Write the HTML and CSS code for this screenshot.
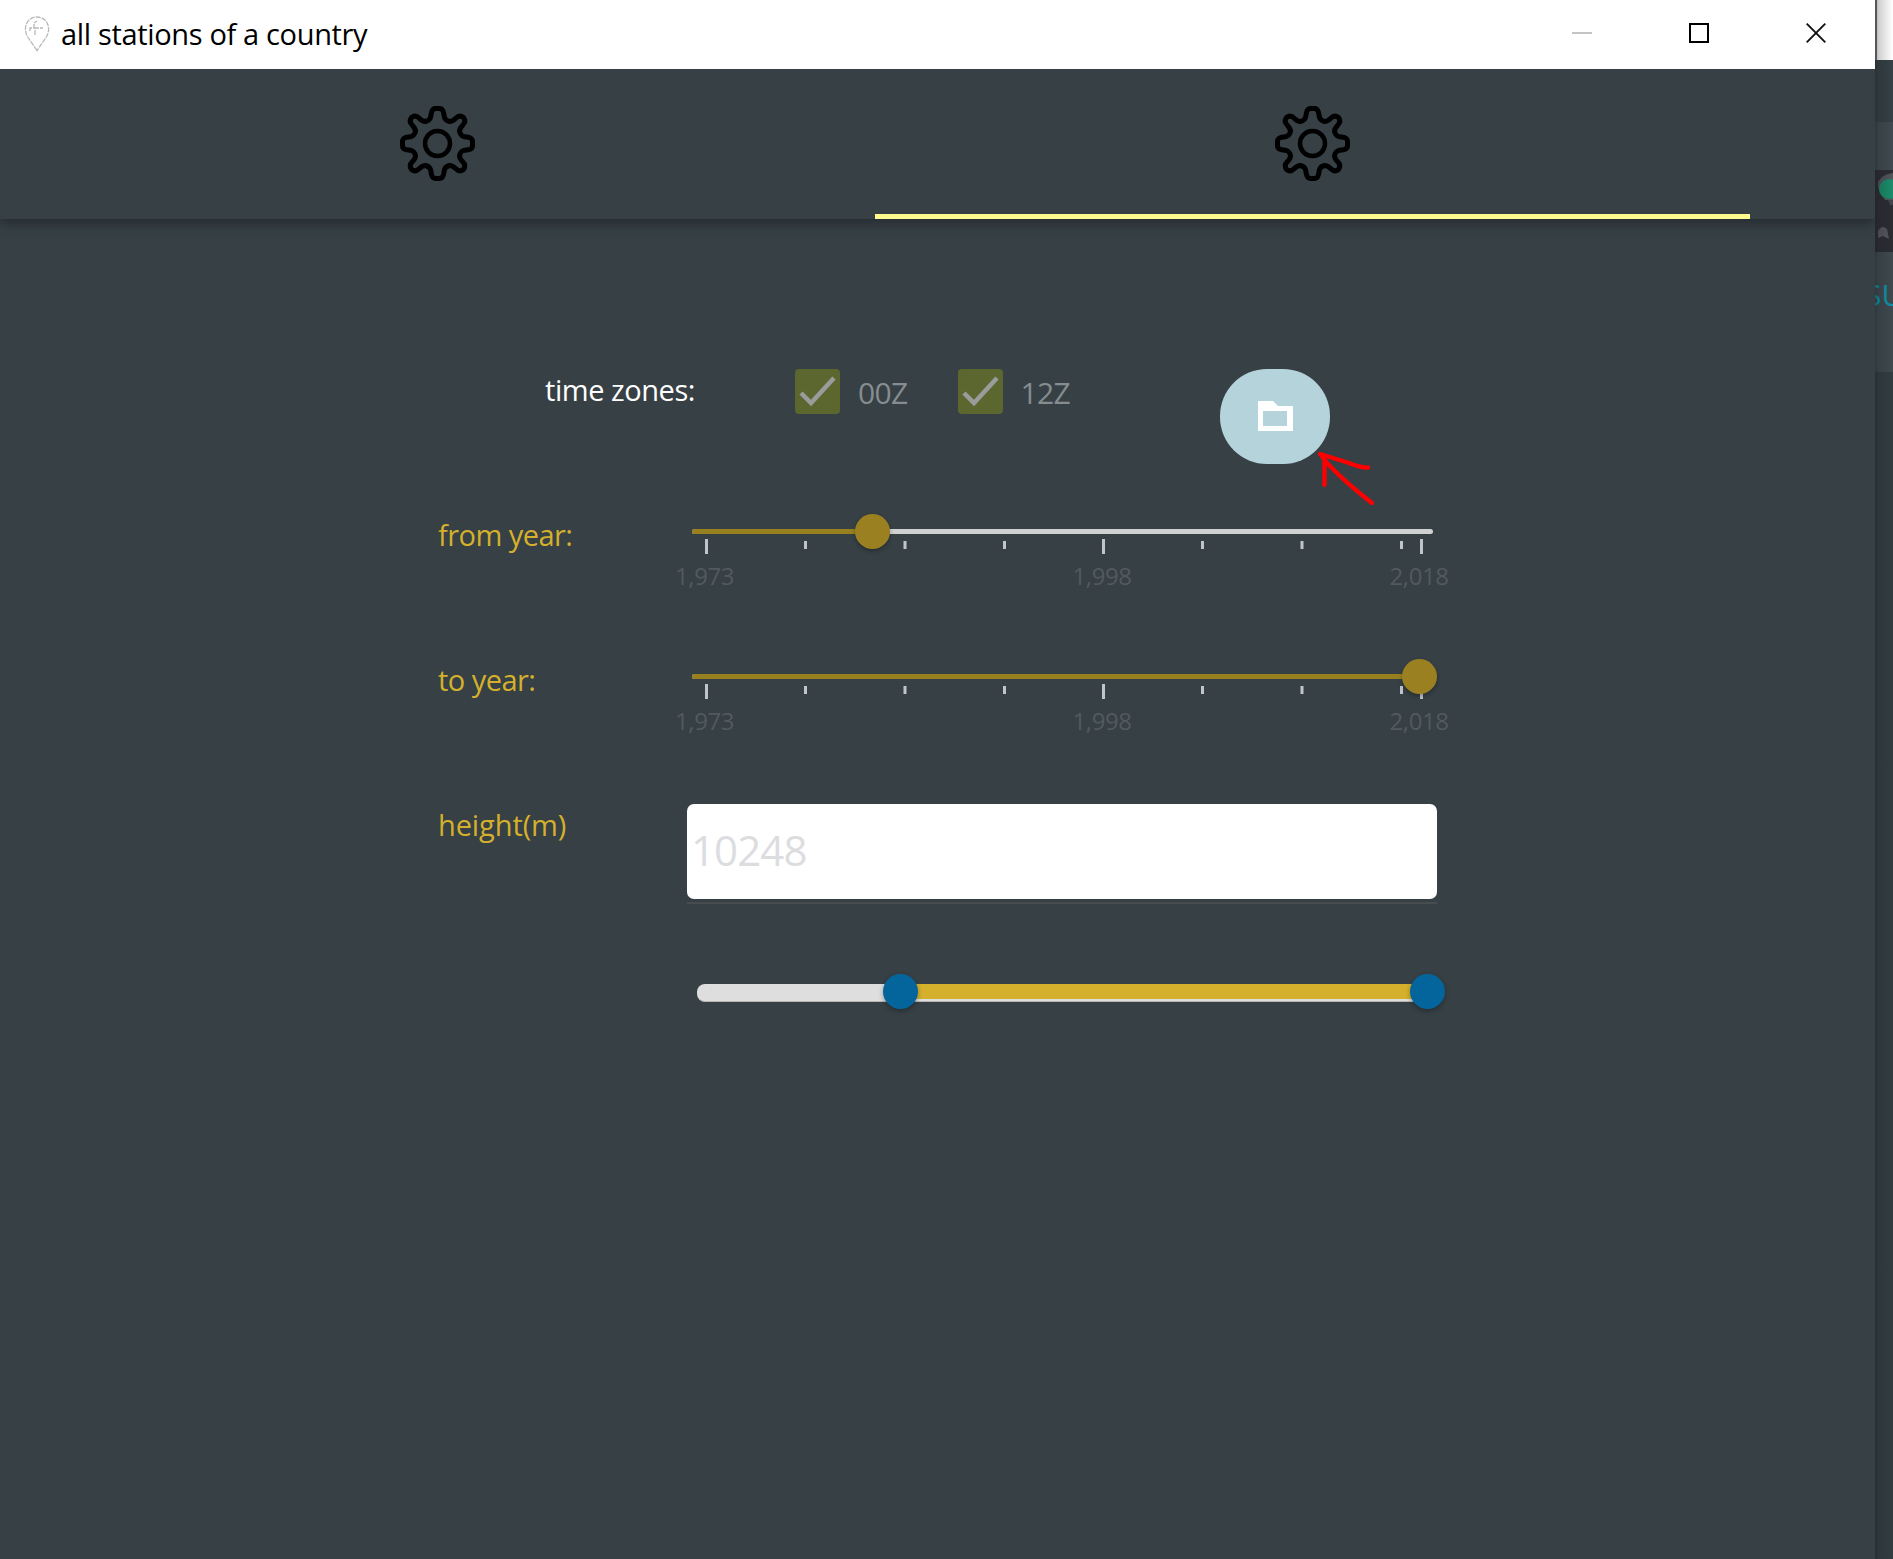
FILE: index.html
```html
<!DOCTYPE html>
<html lang="en">
<head>
<meta charset="utf-8">
<title>all stations of a country</title>
<link rel="stylesheet" href="styles.css">
</head>
<body>
<svg width="0" height="0" class="defs" aria-hidden="true">
  <symbol id="gear" viewBox="-37.5 -37.5 75 75">
    <g fill="none" stroke="#000" stroke-width="5" stroke-linejoin="round">
      <path d="M-6-31Q-5-35-2-35H2Q5-35 6-31L7-26Q8-23 12-22Q15-22 18-25Q22-29 26-26Q29-22 25-18Q22-15 22-12Q23-8 26-7L32-6Q35-5 35-2V2Q35 5 32 6L26 7Q23 8 22 12Q22 15 25 18Q29 22 26 26Q22 29 18 25Q15 22 12 22Q8 23 7 26L6 31Q5 35 2 35H-2Q-5 35-6 31L-7 26Q-8 23-12 22Q-15 22-18 25Q-22 29-26 26Q-29 22-25 18Q-22 15-22 12Q-23 8-26 7L-32 6Q-35 5-35 2V-2Q-35-5-32-6L-26-7Q-23-8-22-12Q-22-15-25-18Q-29-22-26-26Q-22-29-18-25Q-15-22-12-22Q-8-23-7-26Z"/>
      <circle r="12.5" stroke-width="4.500"/>
    </g>
  </symbol>
  <symbol id="check" viewBox="0 0 45 45"><path d="M6 24L16 34L39 9" fill="none" stroke="#9a9c9c" stroke-width="4.500"/></symbol>
  <symbol id="scale" viewBox="0 0 790 60">
    <g fill="#bfc5ca">
      <path d="M34 5h3v15h-3zM431 5h3v15h-3zM749 5h3v15h-3z"/>
      <path d="M133 7h3v8h-3zM232.500 7h3v8h-3zM332 7h3v8h-3zM530 7h3v8h-3zM629.500 7h3v8h-3zM729 7h3v8h-3z"/>
    </g>
  </symbol>
</svg>
<div class="desktop">
  <div class="window">
    <header class="titlebar">
      <svg class="pin" width="26" height="36" viewBox="0 0 26 36"><g fill="none" stroke="#b9b9b9" stroke-width="1.300" stroke-dasharray="5 1"><path d="M13 34.500L4 21.500C-2 12 3 1 13 1S28 12 22 21.500Z"/><path d="M6 15V12H10V7L13 5M11 19V12H19"/></g></svg>
      <h1 class="title">all stations of a country</h1>
      <div class="controls">
        <svg width="20" height="20"><path d="M0 10h20" stroke="#c4c4c4" stroke-width="2"/></svg>
        <svg width="20" height="20"><path d="M1 1h18v18H1z" fill="none" stroke="#000" stroke-width="2"/></svg>
        <svg width="20" height="20"><path d="M.7.700L19.300 19.300M19.300.700L.7 19.300" stroke="#111" stroke-width="1.900"/></svg>
      </div>
    </header>
    <nav class="tabs">
      <div class="tab"><svg class="gear"><use href="#gear"/></svg></div>
      <div class="tab active"><svg class="gear"><use href="#gear"/></svg></div>
    </nav>
    <main class="form">
      <div class="row zones">
        <span class="label light">time zones:</span>
        <label class="check"><svg class="box"><use href="#check"/></svg>00Z</label>
        <label class="check"><svg class="box"><use href="#check"/></svg>12Z</label>
        <div class="folder">
          <svg class="folder-icon" width="36" height="32" viewBox="0 0 36 32"><path fill="#fff" fill-rule="evenodd" d="M1 1H16L21 6H36V31H1ZM6 11V26H30V11Z"/></svg>
          <svg class="arrow" width="62" height="60" viewBox="0 0 62 60"><path d="M56 53Q30 33 12 14L4 4Q20 9 33 13Q45 18 52 17.500M8.500 6V35" fill="none" stroke="#f00" stroke-width="4.300" stroke-linecap="round" stroke-linejoin="round"/></svg>
        </div>
      </div>
      <div class="row">
        <span class="label">from year:</span>
        <div class="slider">
          <div class="track"><div class="fill" style="width:24.4%"></div><i class="thumb" style="left:24.4%"></i></div>
          <svg class="scale"><use href="#scale"/><text x="4" y="51">1,973</text><text x="401.500" y="51">1,998</text><text x="718.500" y="51">2,018</text></svg>
        </div>
      </div>
      <div class="row">
        <span class="label">to year:</span>
        <div class="slider">
          <div class="track"><div class="fill" style="width:98.200%"></div><i class="thumb" style="left:98.200%"></i></div>
          <svg class="scale"><use href="#scale"/><text x="4" y="51">1,973</text><text x="401.500" y="51">1,998</text><text x="718.500" y="51">2,018</text></svg>
        </div>
      </div>
      <div class="row">
        <span class="label wide">height(m)</span>
        <div class="field"><div class="input">10248</div></div>
      </div>
      <div class="range"><div class="span"></div><i class="knob" style="left:203.500px"></i><i class="knob" style="left:730px"></i></div>
    </main>
  </div>
  <aside class="behind">
    <div class="b-title"></div>
    <div class="b-menu"></div>
    <div class="b-band"></div>
    <div class="b-photo"><svg width="16" height="82"><path d="M1 12Q5 4 16 3V30H8Q0 20 1 12Z" fill="#50555a"/><circle cx="12" cy="19" r="10" fill="#198d6a"/><path d="M11 30h5v5h-3z" fill="#42454c"/><path d="M1 61Q5 54 10 59L12 69L6 66L1 68Z" fill="#55565c"/></svg></div>
    <div class="b-panel"><span class="su">su</span></div>
  </aside>
</div>
</body>
</html>
```
FILE: styles.css
```css
* { box-sizing: border-box; }
body {
  margin: 0;
  background: #364045;
  font-family: "Open Sans", "Noto Sans", sans-serif;
  font-size: 29px;
  letter-spacing: -0.3px;
  overflow: hidden;
}
.defs { display: none; }
.desktop { display: flex; height: 1559px; }
.window { width: 1875px; flex: none; display: flex; flex-direction: column; background: #364045; }

.titlebar { height: 69px; flex: none; background: #fff; display: flex; align-items: center; padding: 0 49px 0 24px; }
.pin { margin-top: -2px; }
.title { margin: 0 0 0 11px; font-size: 29px; font-weight: 400; line-height: 66px; height: 68px; letter-spacing: -0.34px; color: #000; }
.controls { margin-left: auto; display: flex; gap: 97px; margin-top: -3px; }
.controls svg:last-child { margin-left: 0; }

.tabs { height: 150px; flex: none; display: flex; box-shadow: 0 4px 11px rgba(25, 28, 38, 0.6); clip-path: inset(0 0 -20px 0); }
.tab { width: 875px; display: flex; justify-content: center; padding-top: 37px; }
.active { border-bottom: 5px solid #fffb8d; }
.gear { width: 75px; height: 75px; }

.form { padding: 150px 0 0 438px; }
.row { display: flex; height: 145px; align-items: flex-start; }
.label { width: 249px; line-height: 42px; letter-spacing: -0.55px; color: #d4b02c; }
.wide { letter-spacing: -0.1px; }
.light { color: #fff; letter-spacing: -0.45px; }
.zones { padding-left: 107px; }
.zones .label { width: 250px; }
.check { display: flex; width: 162.500px; font-size: 30px; line-height: 47px; letter-spacing: -0.6px; color: #868d91; }
.box { width: 45px; height: 45px; border-radius: 4px; background: #5c672f; margin-right: 18px; }
.folder {
  position: relative;
  width: 110px;
  height: 95px;
  margin-left: 100px;
  border-radius: 47px;
  background: #b5d3db;
  display: flex;
  align-items: center;
  justify-content: center;
}
.folder-icon { margin: -2px 1px 0 0; }
.arrow { position: absolute; left: 96px; top: 81px; }

.slider { width: 750px; padding: 15px 0 0 5px; }
.track { position: relative; width: 741px; height: 5px; border-radius: 3px; background: #cfd0d2; }
.fill { height: 5px; border-radius: 3px 0 0 3px; background: #98801f; }
.thumb { position: absolute; top: -15px; width: 35px; height: 35px; margin-left: -17.500px; border-radius: 50%; background: #9b8021; box-shadow: 0 2px 4px rgba(0, 0, 0, 0.3); z-index: 1; }
.scale { display: block; width: 790px; height: 60px; margin-left: -21px; font-size: 24px; letter-spacing: -0.4px; fill: #535960; }

.field { width: 750px; height: 100px; border-bottom: 2px solid #484c4e; }
.input { height: 95px; border-radius: 7px; background: #fff; padding-left: 4px; font-size: 42px; line-height: 92px; letter-spacing: -0.9px; color: #dcdde0; }

.range { position: relative; width: 734px; height: 17.500px; margin: 35px 0 0 259px; border-radius: 8px; background: #dedede; border-bottom: 1px solid #b8b8b0; }
.span { height: 15px; margin-left: 203px; width: 524px; background: #d4b02c; }
.knob { position: absolute; top: -10px; width: 35px; height: 35px; margin-left: -17.500px; border-radius: 50%; background: #04659c; box-shadow: 0 2px 5px rgba(0, 0, 0, 0.3); }

.behind { position: relative; width: 18px; height: 1559px; overflow: hidden; background: #323d42; }
.behind::after { content: ""; position: absolute; inset: 0; background: linear-gradient(90deg, rgba(25, 28, 33, 0.4) 0, rgba(25, 28, 33, 0.2) 4px, rgba(25, 28, 33, 0) 18px); }
.b-title { height: 60px; background: #fff; border-left: 2px solid #777; }
.b-menu { height: 62px; background: #344045; }
.b-band { height: 48px; background: #3f4a50; }
.b-photo { height: 82px; padding-left: 2px; background: #2b2c32; }
.b-panel { height: 120px; background: #3f4a4e; }
.su { display: block; width: 60px; margin-left: -10px; padding-top: 23px; font-size: 30px; line-height: 40px; letter-spacing: 0; color: #0d93aa; text-transform: uppercase; }
```
